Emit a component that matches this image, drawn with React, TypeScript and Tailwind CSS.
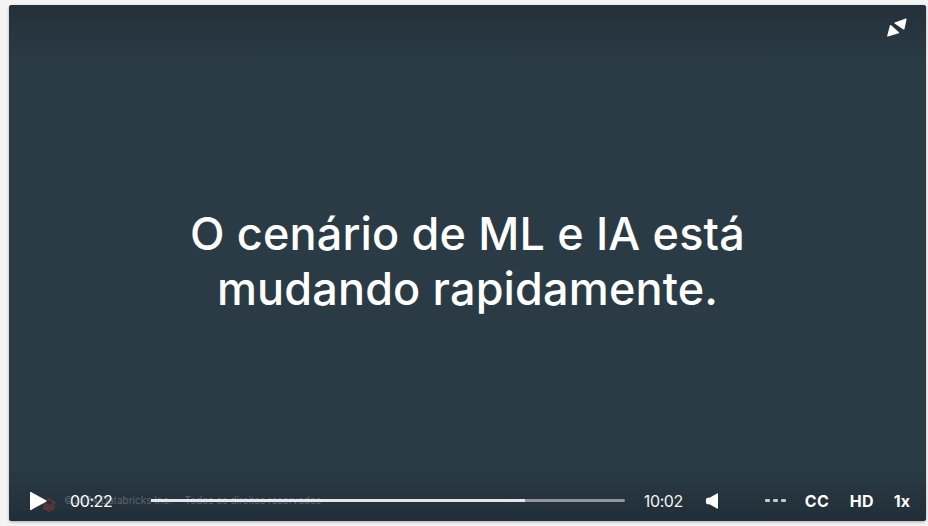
export default function App() {
  return (
    <div className="w-[928px] h-[526px] bg-[#f4f4f4] pl-[9px] pr-[2px] pt-[5px] pb-[5px] overflow-hidden" style={{ fontFamily: '"Inter", "Liberation Sans", sans-serif' }}>
      <div className="relative w-[917px] h-[516px] rounded-[3px] bg-[#2a3b46] flex flex-col overflow-hidden shadow-[0_1px_3px_rgba(0,0,0,0.3)]">
        <div className="h-[60px] bg-gradient-to-b from-[#243039] to-[#2a3b46] flex justify-end pt-[13px] pr-[19px]">
          <svg width="20" height="20" viewBox="0 0 20 20" fill="#fff" stroke="#fff" strokeWidth="1.2" strokeLinejoin="round">
            <path d="M0.8 18 L3.5 7.5 L11.5 14.8 Z" />
            <path d="M19 1 L16.8 11 L8 5 Z" />
          </svg>
        </div>
        <div className="flex-1 flex items-center justify-center pb-[8px]">
          <h1 className="text-white text-[45px] leading-[55px] font-[450] tracking-[0.15px] text-center">
            O cenário de ML e IA está<br />mudando rapidamente.
          </h1>
        </div>
        <div className="relative h-[56px] bg-gradient-to-b from-[#2a3b46] to-[#212e37] flex items-center pl-[20px] pr-[16px] pt-[15px] text-white">
          <svg className="absolute left-[33px] top-[33px]" width="14" height="14" viewBox="0 0 14 14" fill="none" stroke="#7a3a3a" strokeWidth="1.6" opacity="0.75">
            <path d="M1 4.5 L7 1 L13 4.5 L7 8 Z" />
            <path d="M1 7 L7 10.5 L13 7" />
            <path d="M1 9.5 L7 13 L13 9.5" />
          </svg>
          <div className="absolute left-[55px] top-[28px] text-[10px] text-[#6d7d87] opacity-70 whitespace-nowrap flex gap-[13px]">
            <span>©2024 Databricks Inc.</span>
            <span>Todos os direitos reservados</span>
          </div>
          <svg className="relative" width="18" height="20" viewBox="0 0 18 20" fill="#fff">
            <path d="M1 1.5 Q1 0.5 2 1 L17 9.2 Q18 10 17 10.8 L2 19 Q1 19.5 1 18.5 Z" />
          </svg>
          <span className="relative ml-[23px] w-[44px] text-[16px] tracking-[-0.4px]">00:22</span>
          <div className="relative ml-[37px] w-[474px] h-[3px] bg-[#8f979c] rounded-full">
            <div className="h-full w-[374px] bg-[#e6e6e6]" />
          </div>
          <span className="ml-[19px] w-[41px] text-[16px] tracking-[-0.4px] text-[#f4f4f4]">10:02</span>
          <svg className="ml-[20px]" width="14" height="18" viewBox="0 0 14 18" fill="#fff">
            <path d="M1.5 6 L5 5.5 L12 1.5 Q13 1 13 2 L13 16 Q13 17 12 16.5 L5 12.5 L1.5 12 Q0 9 1.5 6 Z" />
          </svg>
          <div className="ml-[46px] flex gap-[3px]">
            <span className="w-[5px] h-[3px] rounded-[1px] bg-[#c4c8cb]" />
            <span className="w-[5px] h-[3px] rounded-[1px] bg-[#c4c8cb]" />
            <span className="w-[5px] h-[3px] rounded-[1px] bg-[#c4c8cb]" />
          </div>
          <span className="ml-[19px] w-[25px] text-[16px] font-bold tracking-[0.4px]">CC</span>
          <span className="ml-[20px] w-[24px] text-[16px] font-bold tracking-[0.2px]">HD</span>
          <span className="ml-[20px] text-[16px] font-bold">1x</span>
        </div>
      </div>
    </div>
  );
}
